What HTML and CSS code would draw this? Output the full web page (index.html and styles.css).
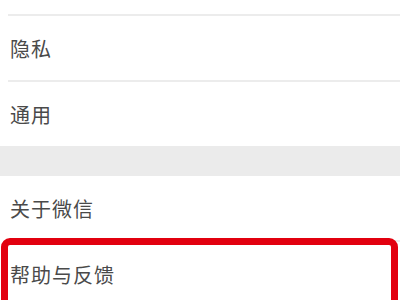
FILE: index.html
```html
<!DOCTYPE html>
<html lang="zh-CN">
<head>
<meta charset="utf-8">
<link rel="stylesheet" href="styles.css">
</head>
<body>
<div class="page">
  <div class="group">
    <div class="stub"></div>
    <div class="sep"></div>
    <div class="row">隐私</div>
    <div class="sep"></div>
    <div class="row">通用</div>
  </div>
  <div class="gap"></div>
  <div class="group">
    <div class="row">关于微信</div>
    <div class="sep"></div>
    <div class="row">帮助与反馈</div>
  </div>
  <div class="highlight"></div>
</div>
</body>
</html>
```
FILE: styles.css
```css
html, body {
  margin: 0;
  padding: 0;
  background: #ffffff;
}
.page {
  position: relative;
  width: 400px;
  height: 300px;
  overflow: hidden;
  font-family: "Noto Sans CJK SC", "Noto Sans", sans-serif;
  color: #4a4a4a;
}
.group {
  display: flex;
  flex-direction: column;
  background: #ffffff;
}
.stub {
  height: 14px;
}
.sep {
  height: 2px;
  margin-left: 8px;
  background: #ececec;
}
.row {
  height: 64px;
  display: flex;
  align-items: center;
  padding-left: 10px;
  padding-top: 1px;
  box-sizing: border-box;
  font-size: 20px;
  letter-spacing: 1px;
}
.gap {
  height: 30px;
  background: #ebebeb;
}
.highlight {
  position: absolute;
  left: 1px;
  top: 238px;
  width: 383px;
  height: 90px;
  border: 7px solid #e2000f;
  border-radius: 9px;
}
```
